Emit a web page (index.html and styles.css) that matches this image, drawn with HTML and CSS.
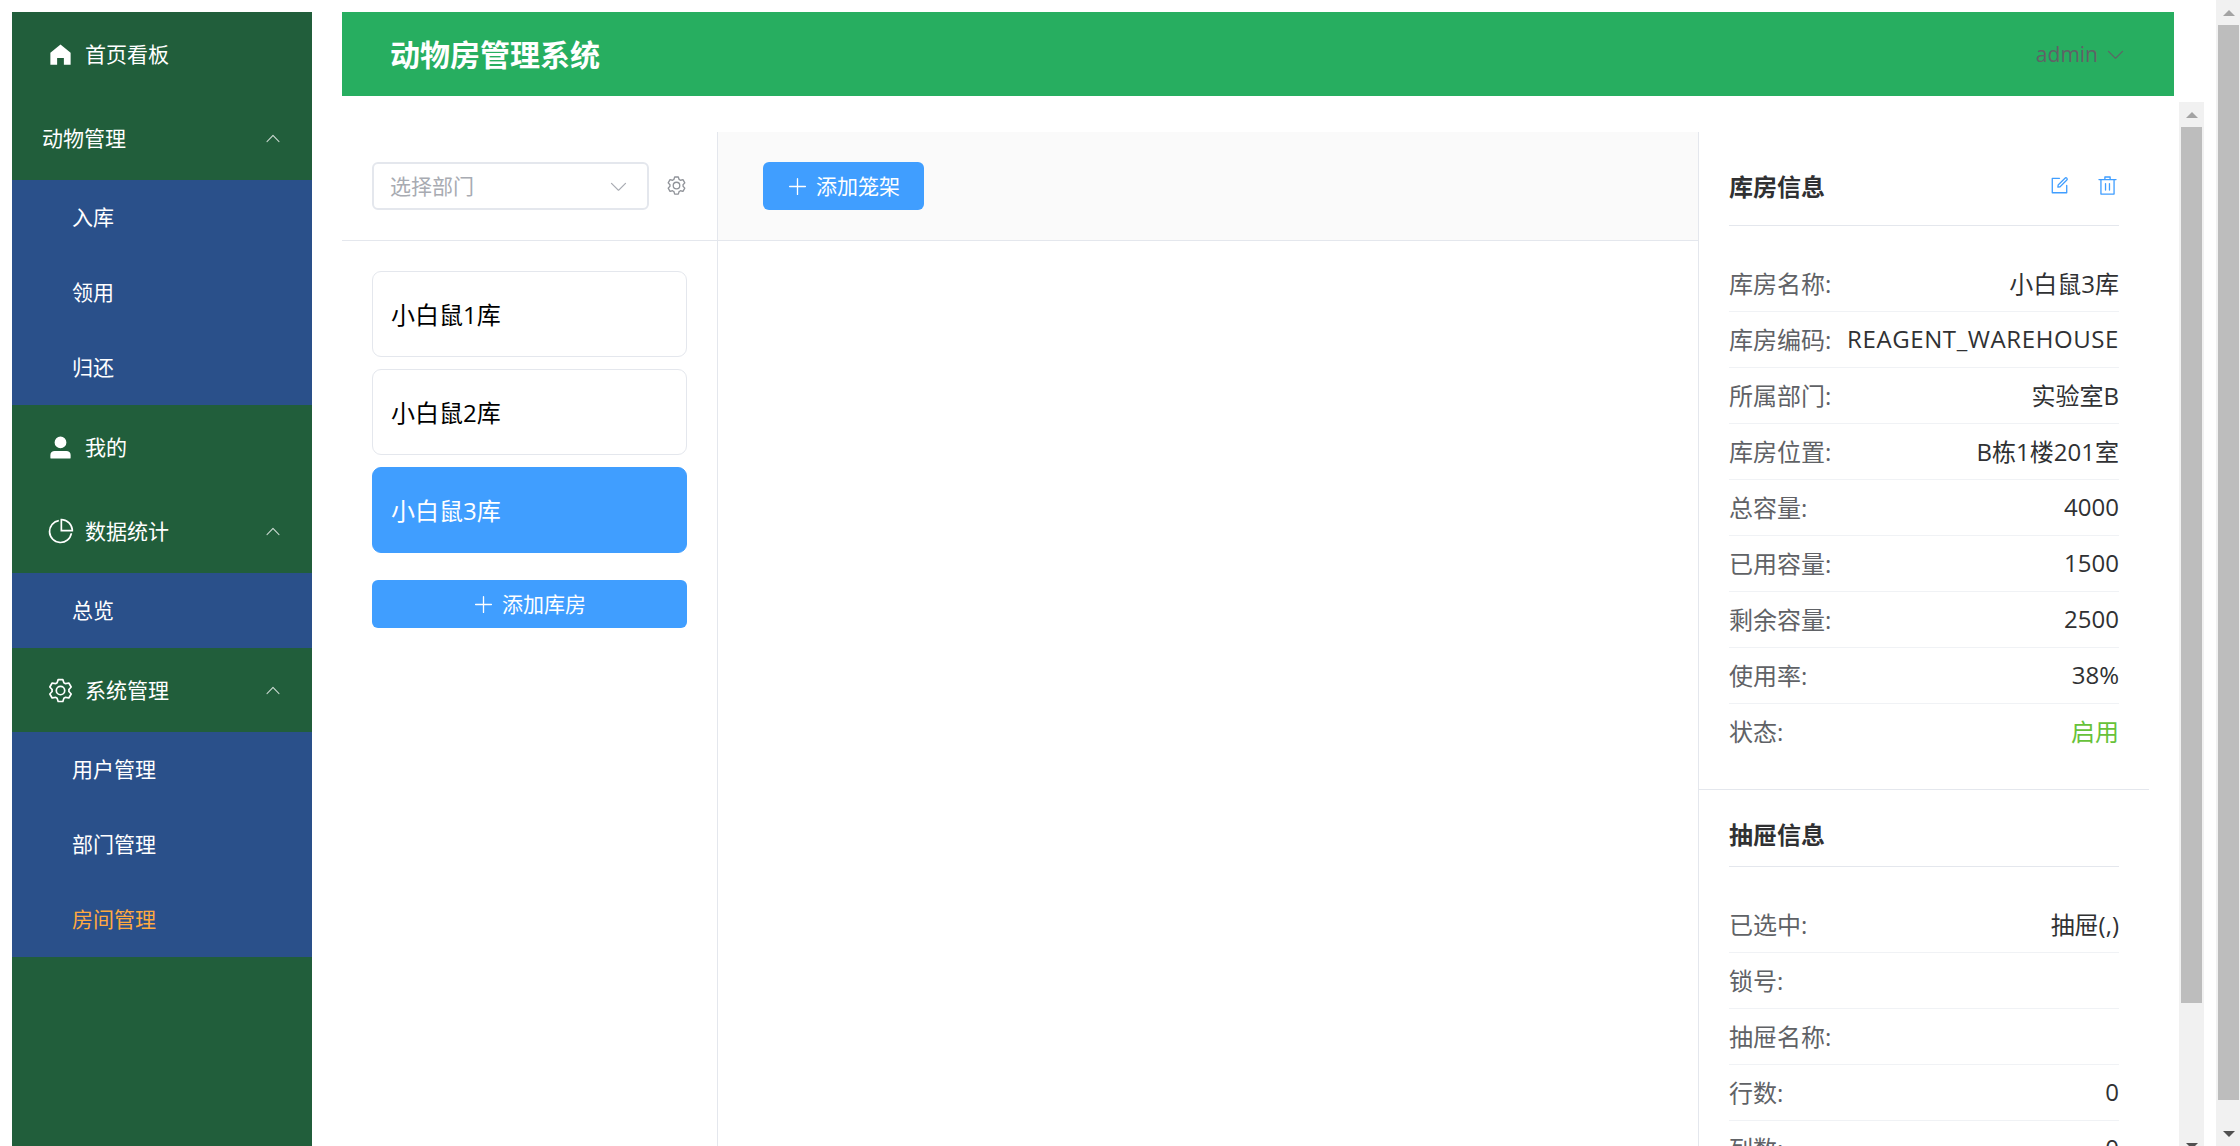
FILE: index.html
```html
<!DOCTYPE html>
<html lang="zh-CN">
<head>
    <meta charset="UTF-8">
    <title>动物房管理系统</title>
    <link rel="stylesheet" href="styles.css">
</head>
<body>
    <svg class="icon-defs" xmlns="http://www.w3.org/2000/svg">
        <symbol id="i-home" viewBox="0 0 1024 1024"><path d="M512 128 128 447.936V896h255.936V640H640v256h255.936V447.936z"/></symbol>
        <symbol id="i-user" viewBox="0 0 1024 1024"><path d="M288 320a224 224 0 1 0 448 0 224 224 0 1 0-448 0zm544 608H160a32 32 0 0 1-32-32v-96a160 160 0 0 1 160-160h448a160 160 0 0 1 160 160v96a32 32 0 0 1-32 32z"/></symbol>
        <symbol id="i-pie" viewBox="0 0 1024 1024"><path d="M448 68.48v64.832A384.128 384.128 0 0 0 512 896a384.128 384.128 0 0 0 378.688-320h64.768A448.128 448.128 0 0 1 64 512 448.128 448.128 0 0 1 448 68.48z"/><path d="M576 97.28V448h350.72A384.064 384.064 0 0 0 576 97.28zM512 64V33.152A448 448 0 0 1 990.848 512H512V64z"/></symbol>
        <symbol id="i-gear" viewBox="0 0 1024 1024"><path d="M600.704 64a32 32 0 0 1 30.464 22.208l35.2 109.376c14.784 7.232 28.928 15.36 42.432 24.512l112.384-24.192a32 32 0 0 1 34.432 15.36L944.32 364.8a32 32 0 0 1-4.032 37.504l-77.12 85.12a357.12 357.12 0 0 1 0 49.024l77.12 85.248a32 32 0 0 1 4.032 37.504l-88.704 153.6a32 32 0 0 1-34.432 15.296L708.8 803.904c-13.44 9.088-27.648 17.28-42.368 24.512l-35.264 109.376A32 32 0 0 1 600.704 960H423.296a32 32 0 0 1-30.464-22.208L357.696 828.48a351.616 351.616 0 0 1-42.56-24.64l-112.32 24.256a32 32 0 0 1-34.432-15.36L79.68 659.2a32 32 0 0 1 4.032-37.504l77.12-85.248a357.12 357.12 0 0 1 0-48.896l-77.12-85.248A32 32 0 0 1 79.68 364.8l88.704-153.6a32 32 0 0 1 34.432-15.296l112.32 24.256c13.568-9.152 27.776-17.408 42.56-24.64l35.2-109.312A32 32 0 0 1 423.232 64H600.64zm-23.424 64H446.72l-36.352 113.088-24.512 11.968a294.113 294.113 0 0 0-34.816 20.096l-22.656 15.36-116.224-25.088-65.28 113.152 79.68 88.192-1.92 27.136a293.12 293.12 0 0 0 0 40.192l1.92 27.136-79.808 88.192 65.344 113.152 116.224-25.024 22.656 15.296a294.113 294.113 0 0 0 34.816 20.096l24.512 11.968L446.72 896h130.688l36.48-113.152 24.448-11.904a288.282 288.282 0 0 0 34.752-20.096l22.592-15.296 116.288 25.024 65.28-113.152-79.744-88.192 1.92-27.136a293.12 293.12 0 0 0 0-40.256l-1.92-27.136 79.808-88.128-65.344-113.152-116.288 24.96-22.592-15.232a287.616 287.616 0 0 0-34.752-20.096l-24.448-11.904L577.344 128zM512 320a192 192 0 1 1 0 384 192 192 0 0 1 0-384zm0 64a128 128 0 1 0 0 256 128 128 0 0 0 0-256z"/></symbol>
        <symbol id="i-up" viewBox="0 0 1024 1024"><path d="m488.832 344.32-339.84 356.672a32 32 0 0 0 0 44.16l.384.384a29.44 29.44 0 0 0 42.688 0l320-335.872 319.872 335.872a29.44 29.44 0 0 0 42.688 0l.384-.384a32 32 0 0 0 0-44.16L535.168 344.32a32 32 0 0 0-46.336 0z"/></symbol>
        <symbol id="i-down" viewBox="0 0 1024 1024"><path d="M831.872 340.864 512 652.672 192.128 340.864a30.592 30.592 0 0 0-42.752 0 29.12 29.12 0 0 0 0 41.6L489.664 714.24a32 32 0 0 0 44.672 0l340.288-331.712a29.12 29.12 0 0 0 0-41.6 30.592 30.592 0 0 0-42.752 0z"/></symbol>
        <symbol id="i-plus" viewBox="0 0 1024 1024"><path d="M480 480V128a32 32 0 0 1 64 0v352h352a32 32 0 0 1 0 64H544v352a32 32 0 1 1-64 0V544H128a32 32 0 0 1 0-64h352z"/></symbol>
        <symbol id="i-edit" viewBox="0 0 1024 1024"><path d="M832 512a32 32 0 1 1 64 0v352a32 32 0 0 1-32 32H160a32 32 0 0 1-32-32V160a32 32 0 0 1 32-32h352a32 32 0 0 1 0 64H192v640h640V512z"/><path d="m469.952 554.24 52.8-7.552L847.104 222.4a32 32 0 1 0-45.248-45.248L477.44 501.44l-7.552 52.8zm422.4-422.4a96 96 0 0 1 0 135.808l-331.84 331.84a32 32 0 0 1-18.112 9.088L436.8 623.68a32 32 0 0 1-36.224-36.224l15.104-105.6a32 32 0 0 1 9.024-18.112l331.904-331.84a96 96 0 0 1 135.744 0z"/></symbol>
        <symbol id="i-delete" viewBox="0 0 1024 1024"><path d="M160 256H96a32 32 0 0 1 0-64h256V95.936a32 32 0 0 1 32-32h256a32 32 0 0 1 32 32V192h256a32 32 0 1 1 0 64h-64v672a32 32 0 0 1-32 32H192a32 32 0 0 1-32-32V256zm448-64v-64H416v64h192zM224 896h576V256H224v640zm192-128a32 32 0 0 1-32-32V416a32 32 0 0 1 64 0v320a32 32 0 0 1-32 32zm192 0a32 32 0 0 1-32-32V416a32 32 0 0 1 64 0v320a32 32 0 0 1-32 32z"/></symbol>
    </svg>

    <div class="page">
        <aside class="sidebar">
            <div class="menu-item"><svg class="menu-icon"><use href="#i-home"/></svg><span>首页看板</span></div>
            <div class="menu-item no-icon"><span>动物管理</span><svg class="menu-arrow"><use href="#i-up"/></svg></div>
            <div class="submenu">
                <div class="sub-item">入库</div>
                <div class="sub-item">领用</div>
                <div class="sub-item">归还</div>
            </div>
            <div class="menu-item"><svg class="menu-icon"><use href="#i-user"/></svg><span>我的</span></div>
            <div class="menu-item"><svg class="menu-icon"><use href="#i-pie"/></svg><span>数据统计</span><svg class="menu-arrow"><use href="#i-up"/></svg></div>
            <div class="submenu">
                <div class="sub-item">总览</div>
            </div>
            <div class="menu-item"><svg class="menu-icon"><use href="#i-gear"/></svg><span>系统管理</span><svg class="menu-arrow"><use href="#i-up"/></svg></div>
            <div class="submenu">
                <div class="sub-item">用户管理</div>
                <div class="sub-item">部门管理</div>
                <div class="sub-item active">房间管理</div>
            </div>
        </aside>

        <div class="main">
            <header class="topbar">
                <h1 class="topbar-title">动物房管理系统</h1>
                <div class="topbar-user"><span>admin</span><svg class="icon-21"><use href="#i-down"/></svg></div>
            </header>

            <div class="content">
                <div class="panels">
                    <section class="room-panel">
                        <div class="room-toolbar">
                            <div class="dept-select">
                                <span>选择部门</span>
                                <svg class="icon-21"><use href="#i-down"/></svg>
                            </div>
                            <svg class="icon-21 dept-gear"><use href="#i-gear"/></svg>
                        </div>
                        <div class="room-list">
                            <div class="room-card">小白鼠1库</div>
                            <div class="room-card">小白鼠2库</div>
                            <div class="room-card selected">小白鼠3库</div>
                            <button class="btn btn-block"><svg class="icon-21"><use href="#i-plus"/></svg><span>添加库房</span></button>
                        </div>
                    </section>

                    <section class="rack-panel">
                        <div class="rack-toolbar">
                            <button class="btn"><svg class="icon-21"><use href="#i-plus"/></svg><span>添加笼架</span></button>
                        </div>
                    </section>

                    <section class="info-panel">
                        <div class="info-section">
                            <div class="info-title">
                                <h3>库房信息</h3>
                                <div class="info-actions">
                                    <svg class="icon-21"><use href="#i-edit"/></svg>
                                    <svg class="icon-21"><use href="#i-delete"/></svg>
                                </div>
                            </div>
                            <div class="info-row"><span class="info-label">库房名称:</span><span class="info-value">小白鼠3库</span></div>
                            <div class="info-row"><span class="info-label">库房编码:</span><span class="info-value code">REAGENT_WAREHOUSE</span></div>
                            <div class="info-row"><span class="info-label">所属部门:</span><span class="info-value">实验室B</span></div>
                            <div class="info-row"><span class="info-label">库房位置:</span><span class="info-value">B栋1楼201室</span></div>
                            <div class="info-row"><span class="info-label">总容量:</span><span class="info-value">4000</span></div>
                            <div class="info-row"><span class="info-label">已用容量:</span><span class="info-value">1500</span></div>
                            <div class="info-row"><span class="info-label">剩余容量:</span><span class="info-value">2500</span></div>
                            <div class="info-row"><span class="info-label">使用率:</span><span class="info-value">38%</span></div>
                            <div class="info-row last"><span class="info-label">状态:</span><span class="info-value enabled">启用</span></div>
                        </div>
                        <div class="info-section drawer">
                            <div class="info-title">
                                <h3>抽屉信息</h3>
                            </div>
                            <div class="info-row"><span class="info-label">已选中:</span><span class="info-value">抽屉(,)</span></div>
                            <div class="info-row"><span class="info-label">锁号:</span><span class="info-value"></span></div>
                            <div class="info-row"><span class="info-label">抽屉名称:</span><span class="info-value"></span></div>
                            <div class="info-row"><span class="info-label">行数:</span><span class="info-value">0</span></div>
                            <div class="info-row"><span class="info-label">列数:</span><span class="info-value">0</span></div>
                        </div>
                    </section>
                </div>

                <div class="scrollbar inner">
                    <div class="scroll-btn"><i class="arrow-up"></i></div>
                    <div class="scroll-thumb inner-thumb"></div>
                    <div class="scroll-btn end"><i class="arrow-down"></i></div>
                </div>
            </div>
        </div>
    </div>

    <div class="scrollbar outer">
        <div class="scroll-btn"><i class="arrow-up"></i></div>
        <div class="scroll-thumb outer-thumb"></div>
        <div class="scroll-btn end"><i class="arrow-down"></i></div>
    </div>
</body>
</html>
```

FILE: styles.css
```css
* {
    box-sizing: border-box;
}
html, body {
    height: 100%;
}
body {
    margin: 0;
    display: flex;
    overflow: hidden;
    background: #fff;
    font-family: "Open Sans", "Noto Sans CJK SC", sans-serif;
    font-size: 21px;
    color: #303133;
}
svg {
    fill: currentColor;
    flex-shrink: 0;
}
.icon-defs {
    display: none;
}
.icon-21 {
    width: 21px;
    height: 21px;
}
.page {
    width: 2216px;
    height: 100%;
    padding: 12px 12px 0;
    display: flex;
    gap: 30px;
}

/* sidebar */
.sidebar {
    width: 300px;
    background: #215e3b;
    color: #fff;
}
.menu-item {
    height: 84px;
    padding: 0 30px 0 35px;
    display: flex;
    align-items: center;
}
.menu-item span {
    margin-bottom: 3px;
}
.menu-item.no-icon {
    padding-left: 30px;
}
.menu-icon {
    width: 27px;
    height: 27px;
    margin-right: 11px;
}
.menu-arrow {
    width: 18px;
    height: 18px;
    margin-left: auto;
    opacity: 0.75;
}
.submenu {
    background: #2a508a;
}
.sub-item {
    height: 75px;
    padding: 0 0 3px 60px;
    display: flex;
    align-items: center;
}
.sub-item.active {
    color: #ffa940;
}

/* top bar */
.main {
    width: 1862px;
    display: flex;
    flex-direction: column;
    overflow: hidden;
}
.topbar {
    width: 1832px;
    height: 84px;
    flex-shrink: 0;
    padding: 0 48px;
    background: #27ae60;
    display: flex;
    align-items: center;
    justify-content: space-between;
}
.topbar-title {
    margin: 0 0 2px;
    font-size: 30px;
    font-weight: 700;
    color: #fff;
}
.topbar-user {
    display: flex;
    align-items: center;
    gap: 7px;
    color: #606266;
}

/* panels */
.content {
    height: 1056px;
    flex-shrink: 0;
    margin-top: 6px;
    display: flex;
}
.panels {
    width: 1837px;
    padding-top: 30px;
    display: flex;
}
.room-panel {
    width: 376px;
    border-right: 1px solid #e4e7ed;
}
.room-toolbar {
    height: 109px;
    padding: 30px 0 0 30px;
    display: flex;
    align-items: flex-start;
    gap: 17px;
    border-bottom: 1px solid #e4e7ed;
}
.dept-select {
    width: 277px;
    height: 48px;
    padding: 0 18px 0 16px;
    display: flex;
    align-items: center;
    justify-content: space-between;
    border: 2px solid #e4e7ed;
    border-radius: 6px;
    color: #a8abb2;
}
.dept-select span {
    margin-bottom: 3px;
}
.dept-gear {
    margin-top: 13px;
    color: #909399;
}
.room-list {
    padding: 30px 30px 0;
    display: flex;
    flex-direction: column;
    gap: 12px;
}
.room-card {
    height: 86px;
    padding: 0 0 1px 18px;
    display: flex;
    align-items: center;
    border: 1.5px solid #e4e7ed;
    border-radius: 9px;
    font-size: 24px;
    color: #000;
}
.room-card.selected {
    background: #409eff;
    border-color: #409eff;
    color: #fff;
}
.btn {
    height: 48px;
    padding: 0 24px;
    display: inline-flex;
    align-items: center;
    justify-content: center;
    gap: 8px;
    background: #409eff;
    border: none;
    border-radius: 6px;
    font: inherit;
    color: #fff;
}
.btn span {
    margin-bottom: 3px;
}
.btn-block {
    margin-top: 15px;
}
.rack-panel {
    width: 980px;
}
.rack-toolbar {
    height: 109px;
    padding: 30px 0 0 45px;
    background: #fafafa;
    border-bottom: 1px solid #e4e7ed;
}

/* right info */
.info-panel {
    width: 451px;
    border-left: 1px solid #e4e7ed;
}
.info-section {
    padding: 37px 30px 29px;
    border-bottom: 1px solid #e4e7ed;
}
.info-section.drawer {
    padding-top: 29px;
    border-bottom: none;
}
.info-title {
    height: 57px;
    margin-bottom: 30px;
    padding-bottom: 23px;
    display: flex;
    align-items: center;
    justify-content: space-between;
    border-bottom: 1px solid #e4e7ed;
}
.drawer .info-title {
    height: 48px;
    padding-bottom: 18px;
}
.info-title h3 {
    margin: 0;
    font-size: 24px;
    font-weight: 700;
    color: #303133;
}
.info-actions {
    margin-right: 1px;
    display: flex;
    gap: 27px;
    color: #409eff;
}
.info-row {
    height: 56px;
    padding-bottom: 3px;
    display: flex;
    align-items: center;
    justify-content: space-between;
    border-bottom: 1px solid #f0f2f5;
    font-size: 24px;
}
.info-row.last {
    border-bottom: none;
}
.info-label {
    color: #606266;
}
.info-value {
    color: #303133;
}
.info-value.code {
    letter-spacing: 0.6px;
}
.info-value.enabled {
    color: #67c23a;
}

/* scrollbars are drawn, the page itself does not scroll */
.scrollbar {
    display: flex;
    flex-direction: column;
    background: #f1f1f1;
    flex-shrink: 0;
}
.scrollbar.inner {
    width: 25px;
    padding: 0 2px;
}
.scrollbar.outer {
    width: 24px;
    height: 100%;
    padding: 0 1px 0 2px;
}
.scroll-btn {
    height: 25px;
    flex-shrink: 0;
    display: flex;
    align-items: center;
    justify-content: center;
}
.scroll-btn.end {
    margin-top: auto;
}
.scroll-thumb {
    background: #bdbdbd;
}
.inner-thumb {
    height: 876px;
}
.outer-thumb {
    height: 1075px;
}
.arrow-up {
    border-left: 6px solid transparent;
    border-right: 6px solid transparent;
    border-bottom: 6px solid #a3a3a3;
}
.arrow-down {
    border-left: 6px solid transparent;
    border-right: 6px solid transparent;
    border-top: 6px solid #505050;
}
```
